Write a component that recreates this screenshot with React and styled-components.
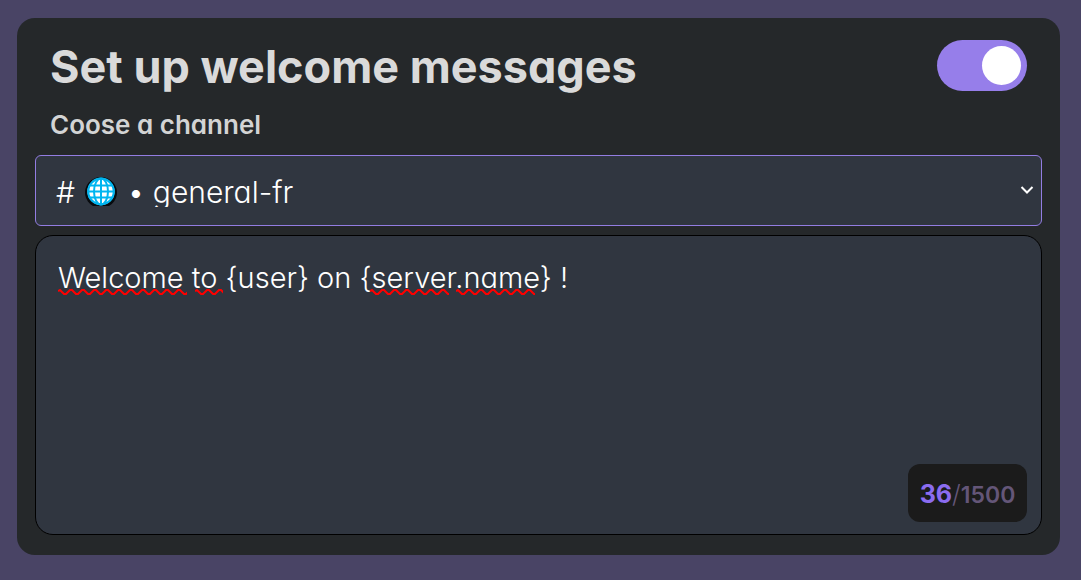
import React, { useState } from "react";
import styled, { createGlobalStyle } from "styled-components";

const GlobalStyle = createGlobalStyle`
  *, *::before, *::after { box-sizing: border-box; }
  body {
    margin: 0;
    background: #494465;
    font-family: Inter, "Liberation Sans", sans-serif;
    font-feature-settings: "cv11" 1;
  }
`;

const Page = styled.main`
  padding: 18px 21px 25px 17px;
`;

const Card = styled.section`
  display: flex;
  flex-direction: column;
  padding: 22px 18px 20px;
  border-radius: 18px;
  background: #25282a;
`;

const Header = styled.header`
  display: flex;
  align-items: flex-start;
  justify-content: space-between;
  gap: 24px;
  padding: 0 15px;
`;

const Title = styled.h1`
  margin: 0;
  color: #dadada;
  font-size: 45px;
  font-weight: 700;
  line-height: 54px;
`;

const Toggle = styled.input`
  appearance: none;
  flex: none;
  display: flex;
  align-items: center;
  width: 90px;
  height: 51px;
  margin: 0;
  padding: 6px;
  border-radius: 26px;
  background: #5b5b66;
  cursor: pointer;

  &::before {
    content: "";
    width: 39px;
    height: 39px;
    border-radius: 50%;
    background: #fff;
  }

  &:checked {
    justify-content: flex-end;
    background: #967eea;
  }
`;

const FieldLabel = styled.label`
  margin: 14px 15px 13px;
  color: #d3d4d4;
  font-size: 26px;
  font-weight: 600;
  line-height: 34px;
`;

const SelectBox = styled.div`
  position: relative;
`;

const ChannelSelect = styled.select`
  appearance: none;
  display: block;
  width: 100%;
  height: 71px;
  margin: 0;
  padding: 2px 48px 0 20px;
  border: 1px solid #937de2;
  border-radius: 6px;
  background: #303640;
  color: #fff;
  font: inherit;
  font-feature-settings: inherit;
  font-size: 30px;
  font-weight: 300;
  line-height: 30px;
`;

const Globe = styled.svg`
  position: absolute;
  left: 50px;
  top: 21px;
  pointer-events: none;
`;

const Chevron = styled.svg`
  position: absolute;
  right: 8px;
  top: 29px;
  pointer-events: none;
`;

const MessageBox = styled.div`
  position: relative;
  margin-top: 9px;
`;

const Message = styled.textarea`
  display: block;
  width: 100%;
  height: 300px;
  margin: 0;
  padding: 22px;
  border: 1px solid #000;
  border-radius: 18px;
  background: #303640;
  color: #fff;
  font: inherit;
  font-feature-settings: inherit;
  font-size: 29px;
  font-weight: 300;
  line-height: 40px;
  resize: none;
  outline: none;
`;

const SpellingMarks = styled.div`
  position: absolute;
  top: 54px;
  left: 23px;
  display: flex;
  pointer-events: none;
`;

const Mark = styled.svg`
  display: block;
  width: ${(p) => p.$width}px;
  height: 7px;
  margin-right: ${(p) => p.$gap}px;
`;

const Counter = styled.output`
  position: absolute;
  right: 15px;
  bottom: 13px;
  display: flex;
  align-items: baseline;
  justify-content: center;
  width: 119px;
  height: 58px;
  border-radius: 12px;
  background: #1b1b1b;
  line-height: 60px;
`;

const Count = styled.span`
  color: #8b6cf0;
  font-size: 25px;
  font-weight: 700;
`;

const Limit = styled.span`
  color: #645678;
  font-size: 23px;
  font-weight: 600;
`;

const Slash = styled.span`
  color: #645678;
  font-size: 25px;
  font-weight: 300;
`;

const marks = [
  { width: 129, gap: 8 },
  { width: 28, gap: 147 },
  { width: 79, gap: 7 },
  { width: 79, gap: 0 },
];

const wave = "M0 2 L2 1 L6 5 L8 5 L12 1 L14 1" + Array.from({ length: 11 }, (_, i) => {
  const x = 14 + i * 12;
  return ` L${x + 4} 5 L${x + 6} 5 L${x + 10} 1 L${x + 12} 1`;
}).join("");

export default function App() {
  const [enabled, setEnabled] = useState(true);
  const [message, setMessage] = useState("Welcome to {user} on {server.name} !");

  return (
    <>
      <GlobalStyle />
      <Page>
        <Card>
          <Header>
            <Title id="welcome-title">Set up welcome messages</Title>
            <Toggle
              type="checkbox"
              role="switch"
              aria-labelledby="welcome-title"
              checked={enabled}
              onChange={(e) => setEnabled(e.target.checked)}
            />
          </Header>
          <FieldLabel htmlFor="channel">Coose a channel</FieldLabel>
          <SelectBox>
            <ChannelSelect id="channel" defaultValue="general-fr">
              <option value="general-fr">{"#\u2003\u2002\u2005• general-fr"}</option>
            </ChannelSelect>
            <Globe width="32" height="31" viewBox="0 0 32 31" aria-hidden="true">
              <path d="M8 30a16 15.5 0 1 1 16 0Z" fill="#080b0e" />
              <circle cx="16" cy="15.5" r="13.5" fill="#fff" />
              <g fill="none" stroke="#00b5f0" strokeWidth="2">
                <circle cx="16" cy="15.5" r="12.8" strokeWidth="2.2" />
                <ellipse cx="16" cy="15.5" rx="7" ry="13" />
                <path d="M16 2v27M3 15.5h26M5 9.5h22M5 21.5h22" />
              </g>
            </Globe>
            <Chevron width="14" height="12" viewBox="0 0 14 12" aria-hidden="true">
              <path d="M1.5 3 L7 8.500 L12.500 3" fill="none" stroke="#fff" strokeWidth="2" />
            </Chevron>
          </SelectBox>
          <MessageBox>
            <Message
              aria-labelledby="welcome-title"
              spellCheck={false}
              maxLength={1500}
              value={message}
              onChange={(e) => setMessage(e.target.value)}
            />
            <SpellingMarks aria-hidden="true">
              {marks.map((m, i) => (
                <Mark key={i} $width={m.width} $gap={m.gap}>
                  <path d={wave} fill="none" stroke="#f00" strokeWidth="2" />
                </Mark>
              ))}
            </SpellingMarks>
            <Counter>
              <Count>{message.length}</Count>
              <Slash>/</Slash>
              <Limit>1500</Limit>
            </Counter>
          </MessageBox>
        </Card>
      </Page>
    </>
  );
}
